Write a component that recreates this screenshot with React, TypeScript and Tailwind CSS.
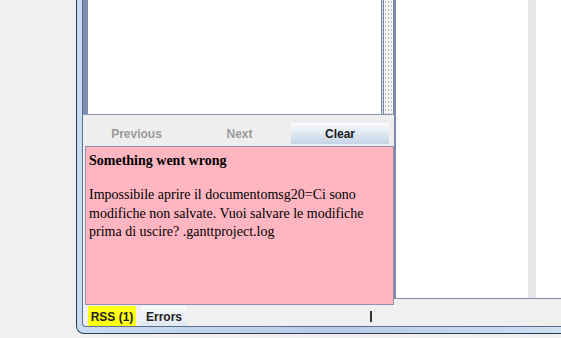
import React from 'react';

const App: React.FC = () => {
  return (
    <div className="w-[561px] h-[338px] bg-[#f0f0f0] flex overflow-hidden font-['Liberation_Sans',Arial,sans-serif]">
      <div className="w-[76px] shrink-0" />

      {/* Window frame */}
      <div className="w-[520px] shrink-0 h-[334px] border-l border-b border-[#2f3b4d] rounded-bl-[8px] bg-linear-to-r from-[#c9dcf1] via-[#b7cde8] to-[#d3e2f3] pl-[5px] pb-[6px]">
        <div className="h-full border-l border-b border-[#5d6f8e] rounded-bl-[4px] bg-[#f0f0f0] flex flex-col">
          {/* Split area */}
          <div className="h-[305px] flex">
            {/* Log panel */}
            <div className="w-[311px] shrink-0 flex flex-col">
              <div className="h-[115px] flex border-b border-[#8896b3]">
                <div className="flex-1 bg-white border-l-[5px] border-[#7f8fae]" />
                <div className="w-[13px] border-l-[3px] border-double border-[#7d8aa6] border-r bg-[#f4f4f4] bg-[radial-gradient(#b4b4b4_0.6px,transparent_0.7px)] bg-[size:3px_4px]" />
              </div>

              <div className="h-[31px] ml-[2px] grid grid-cols-3 items-end pb-[2px] bg-[#eeeeee] text-[12px] font-bold">
                <div className="h-[21px] flex items-center justify-center text-[#9a9a9a]">Previous</div>
                <div className="h-[21px] flex items-center justify-center text-[#9a9a9a]">Next</div>
                <div className="h-[21px] w-[98px] justify-self-start flex items-center justify-center text-[#1a1a1a] bg-linear-to-b from-[#fbfcfe] to-[#c4d4e6]">
                  Clear
                </div>
              </div>

              <div className="ml-[2px] flex-1 bg-[#ffb6c1] border border-[#8f8fae] pl-[3px] pt-[5px] font-['Liberation_Serif','Times_New_Roman',serif] text-[14px] text-black">
                <div className="font-bold leading-[17px]">Something went wrong</div>
                <p className="mt-[17px] leading-[18.5px]">
                  Impossibile aprire il documentomsg20=Ci sono
                  <br />
                  modifiche non salvate. Vuoi salvare le modifiche
                  <br />
                  prima di uscire? .ganttproject.log
                </p>
              </div>
            </div>

            {/* Right panel */}
            <div className="flex-1 h-[299px] border-l-2 border-b border-[#7d8aa6] bg-white flex">
              <div className="ml-[132px] w-[8px] h-full bg-[#e6e6e6]" />
            </div>
          </div>

          {/* Tab row */}
          <div className="mt-[1px] h-[20px] flex items-stretch text-[12px] font-bold text-[#222]">
            <div className="ml-[5px] w-[48px] bg-[#ffff14] flex items-center justify-center pt-[2px]">RSS (1)</div>
            <div className="ml-[5px] w-[46px] bg-linear-to-b from-[#f8fafd] to-[#dfe8f2] flex items-center justify-center pt-[2px]">Errors</div>
            <div className="ml-[183px] self-center w-[2px] h-[11px] bg-[#333]" />
          </div>
        </div>
      </div>
    </div>
  );
};

export default App;
